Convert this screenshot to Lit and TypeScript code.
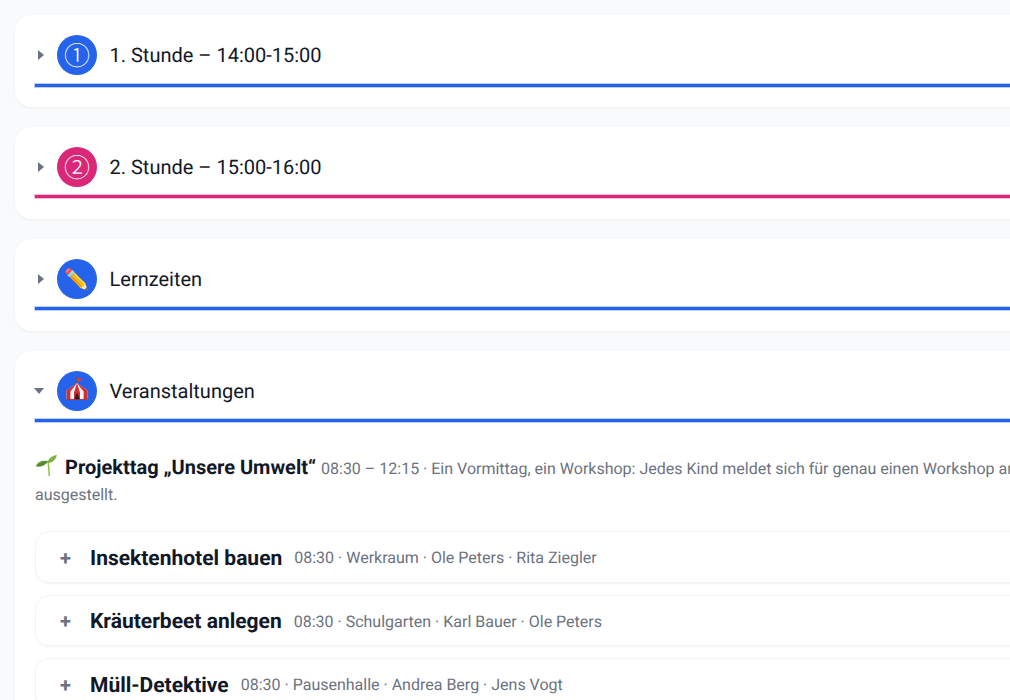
import { LitElement, html, css } from "lit";
import { customElement } from "lit/decorators.js";

const tent = html`<svg class="emoji" width="22" height="24" viewBox="0 0 22 24">
  <path d="M10.7 0.3V7" stroke="#6d4c41" stroke-width="0.9" fill="none" />
  <path d="M11 0.6L17.4 2.6L11 4.8Z" fill="#e53935" />
  <path d="M11 6C8 8.8 4 11 0.6 13.2V22.4H21.4V13.2C18 11 14 8.8 11 6Z" fill="#fafafa" />
  <path d="M11 6C8 8.8 4 11 0.6 13.2V22.4H4.4V14.6C6.4 12 9 9 11 6Z" fill="#d32f2f" />
  <path d="M11 6C13 9 15.6 12 17.6 14.6V22.4H21.4V13.2C18 11 14 8.8 11 6Z" fill="#d32f2f" />
  <path d="M11 6C10 9.5 8.8 12.5 8 15.4V22.4H14V15.4C13.2 12.5 12 9.5 11 6Z" fill="#d32f2f" />
  <path d="M11 15.6L8.4 22.4H13.6Z" fill="#212121" />
  <path d="M0.6 22.4H21.4" stroke="#b71c1c" stroke-width="0.8" />
</svg>`;

const sprout = html`<svg class="sprout" width="22" height="21" viewBox="0 0 22 21">
  <path d="M13 7C13.8 11 14 15.5 14.2 20.4" stroke="#8bc34a" stroke-width="1.5" fill="none" stroke-linecap="round" />
  <path d="M0.7 11.2C3 6.5 8 4.8 13 6.2C11 9.8 6 12.8 0.7 11.2Z" fill="#558b2f" />
  <path d="M0.7 11.2C4 7.8 8 6.2 13 6.2C8.5 6 3 6.8 0.7 11.2Z" fill="#7cb342" />
  <path d="M12.6 8C13 3.6 17 0.6 21.8 0C21.2 4 17.6 8.2 12.6 8Z" fill="#7cb342" />
</svg>`;

const sections = [
  { icon: "①", color: "#2563eb", title: "1. Stunde – 14:00-15:00", open: false },
  { icon: "②", color: "#db2777", title: "2. Stunde – 15:00-16:00", open: false },
  { icon: "✏️", color: "#2563eb", title: "Lernzeiten", open: false },
  { icon: tent, color: "#2563eb", title: "Veranstaltungen", open: true },
];

const workshops = [
  { t: "Insektenhotel bauen", m: "08:30 · Werkraum · Ole Peters · Rita Ziegler" },
  { t: "Kräuterbeet anlegen", m: "08:30 · Schulgarten · Karl Bauer · Ole Peters" },
  { t: "Müll-Detektive", m: "08:30 · Pausenhalle · Andrea Berg · Jens Vogt" },
  { t: "Wasser untersuchen", m: "08:30 · Teich · Rita Ziegler" },
];

@customElement("app-root")
export class AppRoot extends LitElement {
  static styles = css`
    :host {
      display: block;
      width: 1010px;
      height: 700px;
      overflow: hidden;
      background: #f8fafc;
      font-family: Roboto, sans-serif;
      color: #111827;
      text-rendering: geometricPrecision;
    }
    .page {
      display: flex;
      flex-direction: column;
      gap: 20px;
      width: 1270px;
      padding: 15px;
    }
    .card {
      background: #fff;
      border-radius: 16px;
      padding: 20px 20px 20.4px;
      box-shadow: 0 1px 3px rgba(0, 0, 0, 0.05);
    }
    summary {
      display: block;
      list-style: none;
      cursor: pointer;
    }
    .top {
      display: flex;
      align-items: center;
      padding-bottom: 8.5px;
      font-size: 20px;
    }
    .rule {
      height: 3px;
      background: var(--accent);
      box-shadow: 0 0 0 1px color-mix(in srgb, var(--accent) 30%, transparent);
    }
    .caret {
      display: flex;
      justify-content: flex-end;
      width: 10px;
      margin: 0 13px 0 -1px;
    }
    .caret i {
      width: 0;
      height: 0;
      border-style: solid;
      border-color: transparent transparent transparent #6b7280;
      border-width: 5px 0 5px 6px;
    }
    details[open] .caret i {
      border-color: #6b7280 transparent transparent transparent;
      border-width: 6px 5px 0 5px;
    }
    .badge {
      display: flex;
      align-items: center;
      justify-content: center;
      width: 40px;
      height: 40px;
      margin-right: 12.5px;
      border-radius: 50%;
      background: var(--accent);
      color: #fff;
      font-size: 20px;
      line-height: 1;
    }
    .badge.num {
      font-family: "Noto Sans CJK JP", sans-serif;
      font-weight: 300;
      font-size: 26px;
    }
    .emoji {
      margin-top: -4px;
    }
    .body {
      padding-top: 31.8px;
    }
    .intro {
      margin: 0 0 23px;
      font-size: 16px;
      line-height: 26px;
      color: #6b7280;
    }
    .intro strong {
      font-size: 20px;
      font-weight: 700;
      color: #111827;
      margin-right: 1px;
    }
    .sprout {
      margin-right: 8px;
      vertical-align: -2px;
    }
    .list {
      display: flex;
      flex-direction: column;
      gap: 12px;
    }
    .row {
      display: flex;
      align-items: center;
      gap: 12px;
      height: 51.6px;
      box-sizing: border-box;
      padding: 2px 24px 0;
      border: 1px solid #f3f4f6;
      border-radius: 14px;
      box-shadow: 0 1px 2px rgba(0, 0, 0, 0.05);
    }
    .plus {
      width: 18px;
      font-size: 20px;
      font-weight: 700;
      color: #6b7280;
    }
    .row b {
      margin-top: 2px;
      font-size: 21px;
      font-weight: 700;
      color: #111827;
    }
    .row span.meta {
      font-size: 16px;
      color: #6b7280;
    }
  `;

  render() {
    return html`<div class="page">
      ${sections.map(
        (s, i) => html`<details class="card" ?open=${s.open} style="--accent:${s.color}">
          <summary>
            <div class="top">
              <span class="caret"><i></i></span>
              <span class="badge ${i < 2 ? "num" : ""}">${s.icon}</span>${s.title}
            </div>
            <div class="rule"></div>
          </summary>
          ${s.open
            ? html`<div class="body">
                <p class="intro">
                  ${sprout}<strong>Projekttag „Unsere Umwelt“</strong>
                  08:30 – 12:15 · Ein Vormittag, ein Workshop: Jedes Kind meldet sich für genau einen Workshop an. Am Ende wird alles in der Aula
                  ausgestellt.
                </p>
                <div class="list">
                  ${workshops.map(
                    (w) => html`<div class="row">
                      <span class="plus">+</span><b>${w.t}</b><span class="meta">${w.m}</span>
                    </div>`
                  )}
                </div>
              </div>`
            : ""}
        </details>`
      )}
    </div>`;
  }
}
